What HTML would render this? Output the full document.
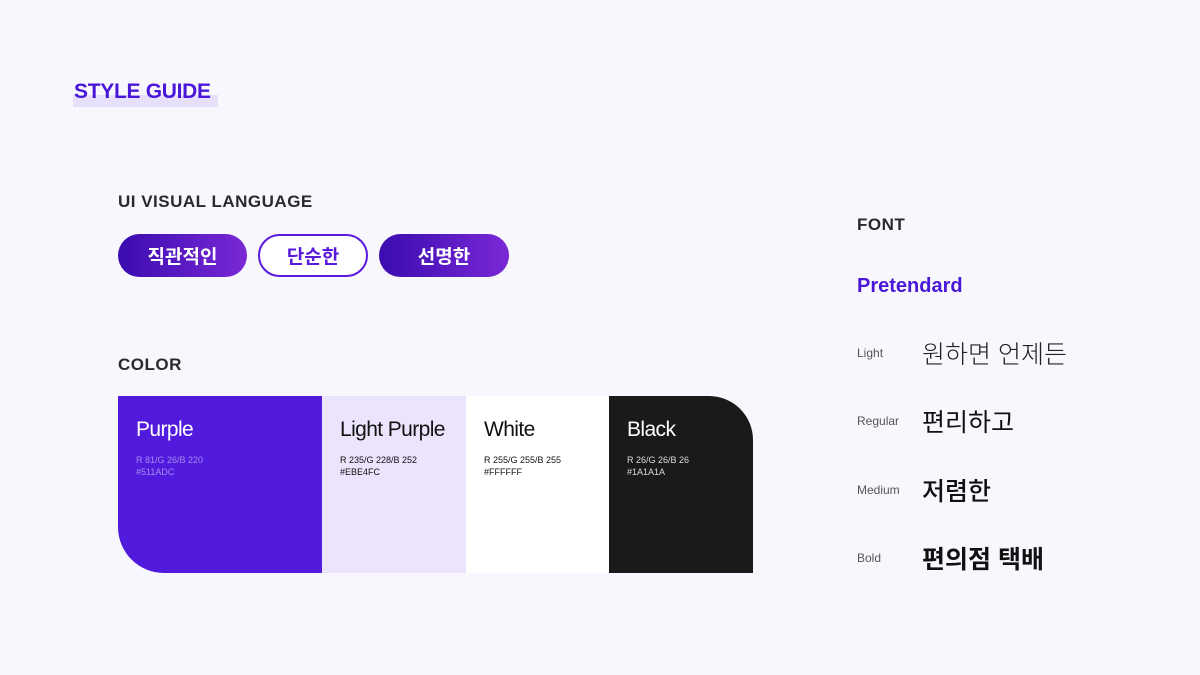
<!DOCTYPE html>
<html><head><meta charset="utf-8"><style>
*{margin:0;padding:0;box-sizing:border-box}
body{width:1200px;height:675px;background:#f8f7fe;position:relative;overflow:hidden;font-family:"Liberation Sans","Noto Sans CJK KR",sans-serif;}
.a{position:absolute;white-space:nowrap}
.h{font-weight:bold;color:#2a2a2a;font-size:17px;letter-spacing:0.5px}
.pill{position:absolute;top:234px;height:43px;border-radius:22px;display:flex;align-items:center;justify-content:center;font-size:19px;font-weight:bold;color:#fff;background:linear-gradient(90deg,#3a0cb0,#7a28d6)}
.sw{position:absolute;top:396px;height:177px;padding:20px 18px;white-space:nowrap}
.sw .t{font-size:21px;margin-top:2px;letter-spacing:-0.6px}
.sw .s{font-size:9px;margin-top:12px;line-height:12px}
.lb{position:absolute;left:857px;font-size:12px;color:#555}
.kr{position:absolute;left:922px;font-size:25px;color:#111}
</style></head><body>
<div class="a" style="left:73px;top:95px;width:145px;height:12px;background:#e6e0fb"></div>
<div class="a" style="left:74px;top:80px;font-size:21px;font-weight:bold;color:#4a16d8;letter-spacing:-0.3px">STYLE GUIDE</div>
<div class="a h" style="left:118px;top:192px">UI VISUAL LANGUAGE</div>
<div class="pill" style="left:118px;width:129px">직관적인</div>
<div class="pill" style="left:258px;width:110px;background:#fff;border:2px solid #5a1adc;color:#5a1adc">단순한</div>
<div class="pill" style="left:379px;width:130px">선명한</div>
<div class="a h" style="left:118px;top:355px">COLOR</div>
<div class="sw" style="left:118px;width:204px;background:#511adc;color:#fff;border-bottom-left-radius:46px"><div class="t">Purple</div><div class="s" style="color:#a58cf0">R 81/G 26/B 220<br>#511ADC</div></div>
<div class="sw" style="left:322px;width:144px;background:#ebe4fc;color:#111"><div class="t">Light Purple</div><div class="s">R 235/G 228/B 252<br>#EBE4FC</div></div>
<div class="sw" style="left:466px;width:143px;background:#fff;color:#111"><div class="t">White</div><div class="s">R 255/G 255/B 255<br>#FFFFFF</div></div>
<div class="sw" style="left:609px;width:144px;background:#1a1a1a;color:#fff;border-top-right-radius:44px"><div class="t">Black</div><div class="s" style="color:#ddd">R 26/G 26/B 26<br>#1A1A1A</div></div>
<div class="a h" style="left:857px;top:215px">FONT</div>
<div class="a" style="left:857px;top:275px;font-size:20px;font-weight:bold;color:#4a16d8">Pretendard</div>
<div class="lb" style="top:346px">Light</div><div class="kr" style="top:335px;font-weight:300;color:#222">원하면 언제든</div>
<div class="lb" style="top:414px">Regular</div><div class="kr" style="top:403px">편리하고</div>
<div class="lb" style="top:483px">Medium</div><div class="kr" style="top:472px;font-weight:500">저렴한</div>
<div class="lb" style="top:551px">Bold</div><div class="kr" style="top:540px;font-weight:bold">편의점 택배</div>
</body></html>
